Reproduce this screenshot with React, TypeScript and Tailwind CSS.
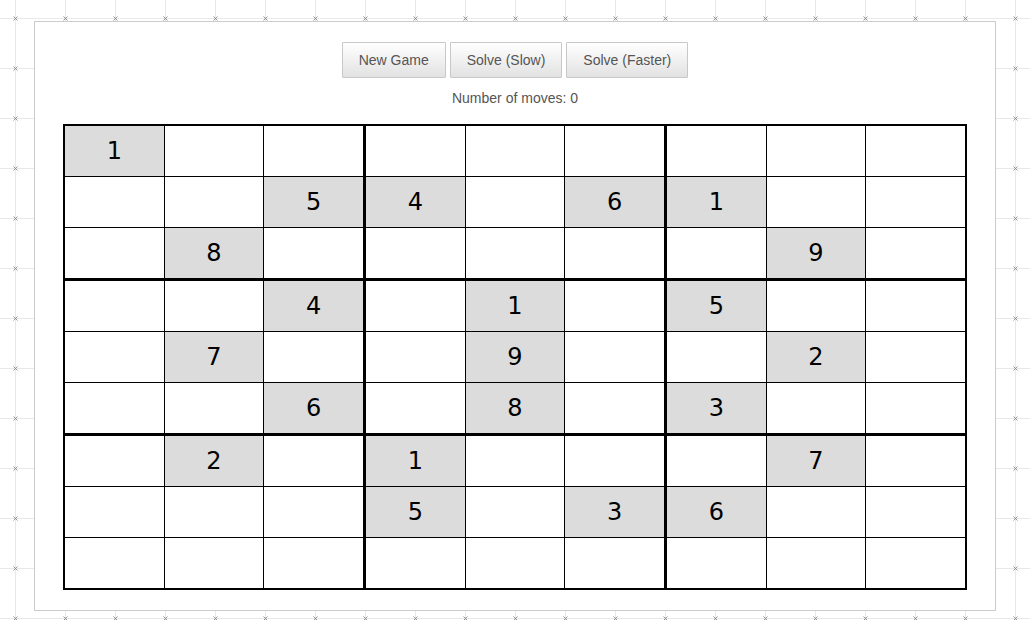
import React from "react";

const G: (number | null)[][] = [
  [1, null, null, null, null, null, null, null, null],
  [null, null, 5, 4, null, 6, 1, null, null],
  [null, 8, null, null, null, null, null, 9, null],
  [null, null, 4, null, 1, null, 5, null, null],
  [null, 7, null, null, 9, null, null, 2, null],
  [null, null, 6, null, 8, null, 3, null, null],
  [null, 2, null, 1, null, null, null, 7, null],
  [null, null, null, 5, null, 3, 6, null, null],
  [null, null, null, null, null, null, null, null, null],
];

function Background() {
  return (
    <svg className="fixed inset-0 w-full h-full" xmlns="http://www.w3.org/2000/svg">
      <defs>
        <pattern id="bgp" x="15" y="18" width="50" height="50" patternUnits="userSpaceOnUse">
          <line x1="0.5" y1="0" x2="0.5" y2="50" stroke="#e8e8e8" strokeWidth="1" />
          <line x1="0" y1="0.5" x2="50" y2="0.5" stroke="#e8e8e8" strokeWidth="1" />
          <path d="M-1.5 -1.5 L2.5 2.5 M2.5 -1.5 L-1.5 2.5" stroke="#8a8a8a" strokeWidth="0.9" />
          <path d="M48.5 -1.5 L52.5 2.5 M52.5 -1.5 L48.5 2.5" stroke="#8a8a8a" strokeWidth="0.9" />
          <path d="M-1.5 48.5 L2.5 52.5 M2.5 48.5 L-1.5 52.5" stroke="#8a8a8a" strokeWidth="0.9" />
          <path d="M48.5 48.5 L52.5 52.5 M52.5 48.5 L48.5 52.5" stroke="#8a8a8a" strokeWidth="0.9" />
        </pattern>
      </defs>
      <rect width="100%" height="100%" fill="#ffffff" />
      <rect width="100%" height="100%" fill="url(#bgp)" />
    </svg>
  );
}

function Btn({ children }: { children: React.ReactNode }) {
  return (
    <button className="h-[36px] px-[16px] border border-[#c8c8c8] bg-[linear-gradient(to_bottom,#ffffff,#e2e2e2)] text-[14px] text-[#555555] font-['Liberation_Sans',Arial,sans-serif] rounded-[1px]">
      {children}
    </button>
  );
}

export default function App() {
  return (
    <div className="relative min-h-[620px]">
      <Background />
      <div className="relative pt-[21px] pl-[34px]">
        <div className="w-[962px] h-[590px] border border-[#cccccc] bg-white pt-[20px] flex flex-col items-center">
          <div className="flex gap-[4px]">
            <Btn>New Game</Btn>
            <Btn>Solve (Slow)</Btn>
            <Btn>Solve (Faster)</Btn>
          </div>
          <div className="mt-[10px] h-[20px] leading-[20px] text-[14px] text-[#555555] font-['Liberation_Sans',Arial,sans-serif]">
            Number of moves: 0
          </div>
          <div className="mt-[16px] w-[904px] border-2 border-black bg-black grid grid-cols-3 gap-[3px]">
            {[0, 1, 2].flatMap((br) =>
              [0, 1, 2].map((bc) => (
                <div key={`${br}-${bc}`} className="grid grid-cols-3 gap-px bg-black">
                  {[0, 1, 2].flatMap((r) =>
                    [0, 1, 2].map((c) => {
                      const v = G[br * 3 + r][bc * 3 + c];
                      return (
                        <div
                          key={`${r}-${c}`}
                          className={`h-[50px] flex items-center justify-center text-[24px] text-black font-['DejaVu_Sans',sans-serif] ${
                            v !== null ? "bg-[#dcdcdc]" : "bg-white"
                          }`}
                        >
                          {v !== null ? v : ""}
                        </div>
                      );
                    })
                  )}
                </div>
              ))
            )}
          </div>
        </div>
      </div>
    </div>
  );
}
